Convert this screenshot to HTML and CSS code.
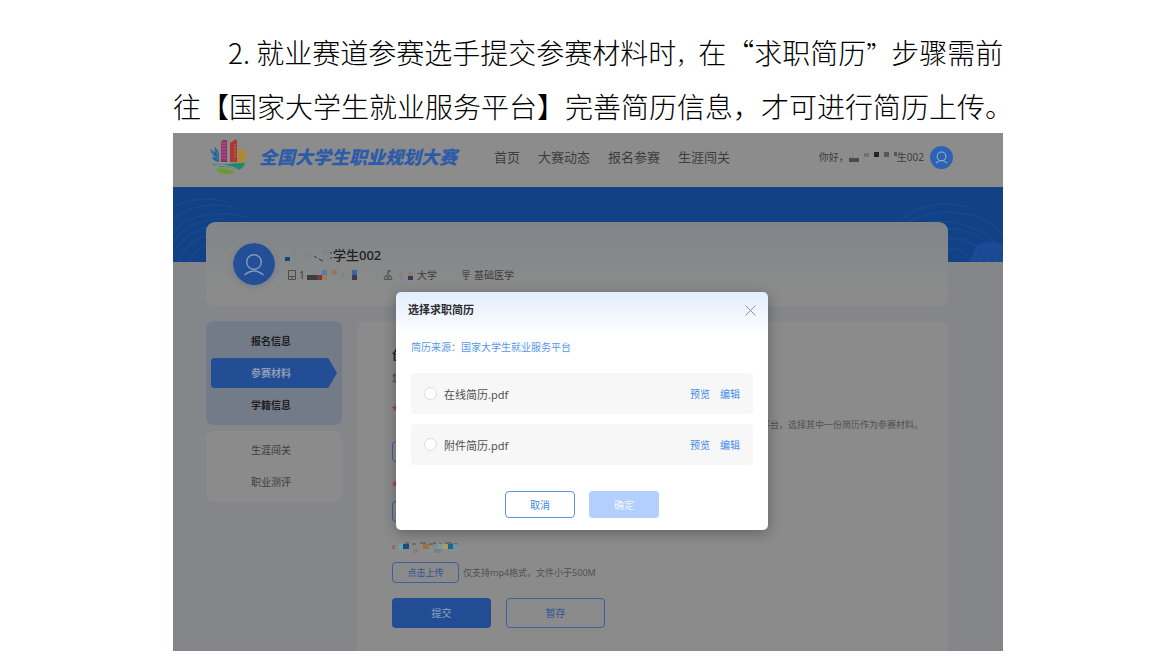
FILE: index.html
```html
<!DOCTYPE html>
<html lang="zh-CN">
<head>
<meta charset="utf-8">
<title>全国大学生职业规划大赛</title>
<meta name="viewport" content="width=device-width, initial-scale=1">
<link rel="stylesheet" href="styles.css">
</head>
<body>
<main class="page">
  <p class="intro intro-first">2. 就业赛道参赛选手提交参赛材料时<span class="comma">，</span>在<span class="quote-open">“</span>求职简历<span class="quote-close">”</span>步骤需前</p>
  <p class="intro">往【国家大学生就业服务平台】完善简历信息，才可进行简历上传。</p>

  <section class="screen">
    <header class="topbar">
      <svg class="logo" viewBox="0 0 37 36" aria-hidden="true">
        <path d="M11 3l2-2h4v22h-6z" fill="#92306d"/>
        <path d="M20 4l6-4 1 2v21h-7z" fill="#a93a35"/>
        <path d="M12 4h4M12 7h4M12 10h4M12 13h4M12 16h4M12 19h4" stroke="#bd7ba4" stroke-width="1" stroke-dasharray="1 .6"/>
        <path d="M25 5v15" stroke="#c7827c" stroke-width="1" stroke-dasharray="1.5 1.5"/>
        <path d="M0 10q3 1 4 4l1-6q4 4 4 9v6Q3 22 2 18q2 0 3 1-3-3-5-9z" fill="#21659b"/>
        <path d="M2 14l6 7M5 11l4 8" stroke="#8c8c8c" stroke-width=".6"/>
        <path d="M28 24V13q1-4 4-5v6q2-3 5-3 0 5-4 8 2-1 4-1-2 6-9 6z" fill="#b08a26"/>
        <path d="M29 22l6-8M29 18l3-6" stroke="#8c8c8c" stroke-width=".6"/>
        <path d="M2 25q8 1 16 0t17-1q-2 7-8 7-7-4-15-3-8-1-10-3z" fill="#24866f"/>
        <path d="M5 27q14-2 23 4" stroke="#8c9c96" stroke-width="1.200" fill="none"/>
        <path d="M6 30q10-2 19 3-5 3-11 2-6-1-8-5z" fill="#6b9a30"/>
      </svg>
      <h1 class="brand">全国大学生职业规划大赛</h1>
      <nav class="nav">
        <a href="#">首页</a><a href="#">大赛动态</a><a href="#">报名参赛</a><a href="#">生涯闯关</a>
      </nav>
      <div class="greeting">
        <span>你好，</span>
        <svg class="mosaic" width="48" height="12" viewBox="1 0 48 12" aria-hidden="true">
          <path d="M1 7h10v4H1z" fill="#4b4b4b"/><path d="M5 2v4M1 6h3" stroke="#7c7c7c"/>
          <path d="M16 2h5v4h-5z" fill="#727272"/><path d="M26 1h5v5h-5z" fill="#252525"/>
          <path d="M36 1h5v5h-5z" fill="#575757"/><path d="M46 1h5v4h-5z" fill="#575757"/>
        </svg>
        <span>生002</span>
        <svg class="avatar-small" viewBox="0 0 42 42" aria-hidden="true">
          <circle cx="21" cy="21" r="21" fill="#2e62b5"/>
          <g fill="none" stroke="#98aac8" stroke-width="2"><circle cx="21" cy="19" r="8"/><path d="M11 31q10-9 20 0"/></g>
        </svg>
      </div>
    </header>

    <div class="stage">
      <svg class="waves waves-left" viewBox="0 0 90 75" aria-hidden="true">
        <g fill="none" stroke="#194a8e" stroke-width="1.3">
          <path d="M0 20Q25 8 52 14M0 32Q30 10 65 22M0 44Q25 20 75 30M0 55Q20 30 50 32M0 66Q14 42 45 38M5 75Q15 50 45 46M15 75Q23 58 45 54"/>
        </g>
      </svg>
      <svg class="waves waves-right" viewBox="0 0 110 75" aria-hidden="true">
        <g fill="none" stroke="#194a8e" stroke-width="1.3">
          <path d="M5 35Q35 10 75 20M15 35Q45 18 85 30Q98 35 110 48M35 35Q75 28 110 62M55 42Q85 40 110 72M55 52Q80 48 95 75M55 62Q68 58 78 75"/>
        </g>
        <path d="M77 75q3-12 9-18 12-4 24 0v18z" fill="#1a4b94"/>
        <path d="M82 75l6-12M90 75l5-12M98 75l5-11M105 75l4-10" stroke="#14458d"/>
      </svg>

      <section class="profile">
        <svg class="avatar" viewBox="0 0 42 42" aria-hidden="true">
          <circle cx="21" cy="21" r="21" fill="#234f97"/>
          <g fill="none" stroke="#8499bd" stroke-width="1.4"><circle cx="21" cy="19" r="7.3"/><path d="M11.500 32q9.500-8 19 0"/></g>
        </svg>
        <div class="profile-text">
          <div class="profile-name">
            <svg class="mosaic" width="48" height="14" viewBox="0 0 48 14" aria-hidden="true">
              <path d="M0 9h5v4H0z" fill="#17457e"/><path d="M5 9h5v4H5zM10 5h5v5h-5z" fill="#7d8c91"/>
              <path d="M6 5h8M9 2v10M18 5h8M20 8h6M37 4h8M39 2v10M43 2v10" stroke="#7d8184"/>
              <path d="M29 8l3 2M34 11l4 2M46 4v2M46 9v2" stroke="#343638"/>
            </svg><span>学生002</span>
          </div>
          <div class="profile-meta">
            <span class="meta meta-id">
              <svg width="10" height="10" viewBox="0 0 10 10" aria-hidden="true"><path d="M1.500.5h7v9h-7zM1.500 6.500h7M4 8h2" fill="none" stroke="#4d4e4f"/></svg>
              <span>1</span>
              <svg class="mosaic" width="52" height="12" viewBox="0 0 52 12" aria-hidden="true">
                <path d="M0 6h10v5H0z" fill="#3e3b44"/><path d="M10 6h5v5h-5z" fill="#6a3f43"/><path d="M15 1h5v5h-5z" fill="#517fa8"/><path d="M15 6h5v5h-5z" fill="#a87c4d"/>
                <path d="M25 1h5v5h-5z" fill="#97745c"/><path d="M32 6h8M36 3v7" stroke="#7c8185"/><path d="M45 1h5v5h-5z" fill="#3a6795"/><path d="M45 6h5v5h-5z" fill="#3b394c"/>
              </svg>
            </span>
            <span class="meta meta-school">
              <svg width="10" height="10" viewBox="0 0 10 10" aria-hidden="true"><path d="M1 9.500h8L8 6H2zM3 6l2-2 2 2M5 4V.500h2v1.500H5M4 9V7.500h2V9" fill="none" stroke="#4d4e4f" stroke-width=".9"/></svg>
              <svg class="mosaic" width="18" height="12" viewBox="0 0 18 12" aria-hidden="true"><path d="M2 3h5M1 6h6M5 2v9" stroke="#7d8082"/><path d="M12 7h5v4h-5z" fill="#42365e"/><path d="M12 3h5v4h-5z" fill="#858173"/></svg>
              <span>大学</span>
            </span>
            <span class="meta">
              <svg width="10" height="10" viewBox="0 0 10 10" aria-hidden="true"><path d="M2 .5h6v2H2zM1 4.500h8M2 6.500h6M5 2.500V9.500M3.500 9.500h3" fill="none" stroke="#4d4e4f" stroke-width=".9"/></svg>
              <span>基础医学</span>
            </span>
          </div>
        </div>
      </section>

      <div class="columns">
        <aside class="sidebar">
          <div class="menu menu-primary">
            <button type="button">报名信息</button>
            <button type="button" class="active">参赛材料</button>
            <button type="button">学籍信息</button>
          </div>
          <div class="menu">
            <button type="button">生涯闯关</button>
            <button type="button">职业测评</button>
          </div>
        </aside>

        <section class="form-card">
          <h2 class="form-title">创</h2>
          <p class="form-note">您</p>
          <p class="label">*</p>
          <p class="hint-right">国家大学生就业服务平台，选择其中一份简历作为参赛材料。</p>
          <button type="button" class="upload">点击上传</button>
          <p class="label">*</p>
          <button type="button" class="upload upload-second">点击上传</button>
          <svg class="label-mosaic" width="68" height="12" viewBox="0 0 68 12" aria-hidden="true">
            <path d="M0 4l3 4M3 4L0 8" stroke="#8a5540"/><path d="M7 3h5v5H7z" fill="#6ea3ab"/><path d="M11 3h6v5h-6z" fill="#174b82"/>
            <path d="M13 2h4M20 3h4M28 2h6M37 3h4M41 2h3M47 3h3M53 2h7M61 3h5" stroke="#4b4c4d"/>
            <path d="M31 3h6v5h-6z" fill="#a0713f"/><path d="M46 3h5v5h-5z" fill="#73a2a5"/><path d="M51 3h5v5h-5z" fill="#b29b5f"/><path d="M56 3h5v5h-5z" fill="#1f659a"/><path d="M61 3h4v5h-4z" fill="#6699a3"/>
            <path d="M6 8h6v4H6zM36 8h6v4h-6zM60 8h5v4h-5z" fill="#809293"/><path d="M21 8h5v4h-5zM42 8h8v4h-8z" fill="#807f7d"/>
          </svg>
          <div class="upload-row">
            <button type="button" class="upload">点击上传</button>
            <span>仅支持mp4格式，文件小于500M</span>
          </div>
          <div class="actions">
            <button type="button" class="submit">提交</button>
            <button type="button" class="save">暂存</button>
          </div>
        </section>
      </div>
    </div>

    <div class="dialog" role="dialog" aria-labelledby="dialog-title">
      <div class="dialog-head">
        <h2 id="dialog-title">选择求职简历</h2>
        <button type="button" class="close" aria-label="关闭"><svg width="11" height="11" viewBox="0 0 11 11"><path d="M.5.5l10 10M10.500.5l-10 10" stroke="#8d9196" fill="none"/></svg></button>
      </div>
      <p class="source">简历来源：<a href="#">国家大学生就业服务平台</a></p>
      <div class="files">
        <div class="file">
          <input type="radio" name="resume" id="online"><label for="online">在线简历.pdf</label>
          <a href="#">预览</a><a href="#">编辑</a>
        </div>
        <div class="file">
          <input type="radio" name="resume" id="attached"><label for="attached">附件简历.pdf</label>
          <a href="#">预览</a><a href="#">编辑</a>
        </div>
      </div>
      <div class="dialog-actions">
        <button type="button" class="cancel">取消</button>
        <button type="button" class="confirm">确定</button>
      </div>
    </div>
  </section>
</main>
</body>
</html>
```

FILE: styles.css
```css
* { box-sizing: border-box; }
body {
  margin: 0;
  background: #fff;
  font-family: "Noto Sans", "Noto Sans CJK SC", sans-serif;
}
h1, h2, p { margin: 0; }
a { color: inherit; text-decoration: none; }
button { padding: 0; border: 0; background: none; font: inherit; color: inherit; cursor: pointer; }
svg { display: block; flex: none; }

.page { padding: 24px 173px 9px; }
.intro {
  font-family: "Noto Sans CJK SC", sans-serif;
  font-weight: 300;
  font-size: 28px;
  line-height: 53px;
  color: #000;
  white-space: nowrap;
}
.intro-first { padding-left: 55px; line-height: 56px; }
.comma { font-size: 22px; line-height: 1; }
.quote-close { font-size: 25px; line-height: 1; }

.screen { position: relative; background: #84868a; color: #3c3d3e; }

.topbar {
  display: flex;
  align-items: center;
  height: 54px;
  padding: 0 50px 6px 37px;
  background: #8c8c8c;
}
.logo { width: 37px; height: 36px; }
.brand {
  margin-left: 12px;
  font-size: 18px;
  font-weight: 900;
  font-style: italic;
  line-height: 24px;
  color: #2c5ba8;
  white-space: nowrap;
}
.nav { display: flex; gap: 18px; margin-left: 37px; font-size: 13px; line-height: 20px; white-space: nowrap; }
.greeting { display: flex; align-items: center; margin-left: auto; font-size: 10px; line-height: 16px; white-space: nowrap; }
.avatar-small { width: 23px; height: 23px; margin-left: 6px; }

.stage {
  position: relative;
  padding: 35px 55px 0 33px;
  background: linear-gradient(#114187, #114187) top / 100% 75px no-repeat;
}
.waves { position: absolute; top: 0; height: 75px; }
.waves-left { left: 0; width: 90px; }
.waves-right { right: 0; width: 110px; }

.profile {
  position: relative;
  display: flex;
  align-items: center;
  gap: 10px;
  height: 84px;
  padding-left: 27px;
  border-radius: 9px;
  background: linear-gradient(#818589, #8b8b8b 80%);
}
.avatar { width: 42px; height: 42px; border-radius: 50%; box-shadow: 0 2px 5px #55709c80; }
.profile-text { padding-top: 2px; }
.profile-name { display: flex; align-items: center; font-size: 13px; font-weight: 500; line-height: 20px; color: #202122; }
.profile-meta { display: flex; margin-left: 2px; font-size: 10px; line-height: 20px; }
.meta { display: flex; align-items: center; gap: 3px; }
.meta-id { width: 96px; gap: 2px; }
.meta-school { width: 78px; }

.columns { display: flex; gap: 15px; padding-top: 15px; }
.sidebar { display: flex; flex-direction: column; gap: 6px; width: 136px; }
.menu {
  display: flex;
  flex-direction: column;
  gap: 2px;
  padding: 4px 5px 5px;
  border-radius: 8px;
  background: #8b8b8b;
  font-size: 10px;
}
.menu button { height: 30px; padding: 0 6px 2px 0; }
.menu-primary { padding-top: 5px; background: #737b89; color: #1e2023; font-weight: 700; }
.menu .active {
  border-radius: 4px;
  background: #234e95;
  color: #8c9bb7;
  clip-path: polygon(0 0, 93% 0, 100% 50%, 93% 100%, 0 100%);
}

.form-card {
  flex: 1;
  display: flex;
  flex-direction: column;
  align-items: flex-start;
  padding: 25px 25px 23px 35px;
  border-radius: 9px 9px 0 0;
  background: #8b8b8b;
  font-size: 9px;
}
.form-title { font-size: 12px; line-height: 20px; color: #202122; }
.form-note { margin-top: 4px; font-size: 10px; line-height: 16px; }
.label { margin-top: 17px; font-size: 12px; line-height: 16px; color: #a0303a; }
.hint-right { align-self: flex-end; margin-bottom: 10px; line-height: 12px; color: #505152; white-space: nowrap; }
.upload { width: 67px; height: 21px; padding-bottom: 1px; border: 1px solid #3d5f9c; border-radius: 4px; color: #2c539b; }
.upload-second { margin-top: 6px; }
.label-mosaic { margin-top: 19px; }
.upload-row { display: flex; align-items: center; gap: 4px; margin-top: 9px; color: #505152; }
.actions { display: flex; gap: 15px; margin-top: 15px; font-size: 10px; }
.actions button { width: 99px; height: 30px; padding-bottom: 2px; border-radius: 4px; }
.submit { background: #224d94; color: #91a2c0; }
.actions .save { border: 1px solid #3d5f9c; color: #2c539b; }

.dialog {
  position: absolute;
  top: 159px;
  left: calc(50% - 192px);
  width: 372px;
  padding: 0 15px 12px;
  border-radius: 5px;
  background: linear-gradient(#e2edfd, #fff 44px);
  box-shadow: 0 3px 14px #0000004d;
}
.dialog-head { display: flex; justify-content: space-between; align-items: center; height: 36px; margin: 0 -3px; }
.dialog-head h2 { font-size: 11px; line-height: 16px; color: #2b2d30; }
.source { margin-top: 11px; font-size: 10px; line-height: 16px; color: #5797e8; }
.files { display: grid; gap: 10px; margin-top: 18px; }
.file {
  display: flex;
  align-items: center;
  gap: 10px;
  height: 41px;
  padding: 0 13px;
  border-radius: 4px;
  background: #f7f7f7;
  font-size: 10px;
  color: #4089ec;
}
.file input { appearance: none; width: 13px; height: 13px; margin: 0; border: 1px solid #dcdcdc; border-radius: 50%; background: #fff; }
.file label { flex: 1; margin-left: -3px; font-size: 11px; color: #505050; }
.dialog-actions { display: flex; justify-content: center; gap: 14px; margin-top: 26px; font-size: 10px; }
.dialog-actions button { width: 70px; height: 27px; padding-bottom: 1px; border-radius: 4px; }
.dialog-actions .cancel { border: 1px solid #5b93e0; color: #4087e8; }
.dialog-actions .confirm { background: #b2cffd; color: #f0f6ff; }
```
